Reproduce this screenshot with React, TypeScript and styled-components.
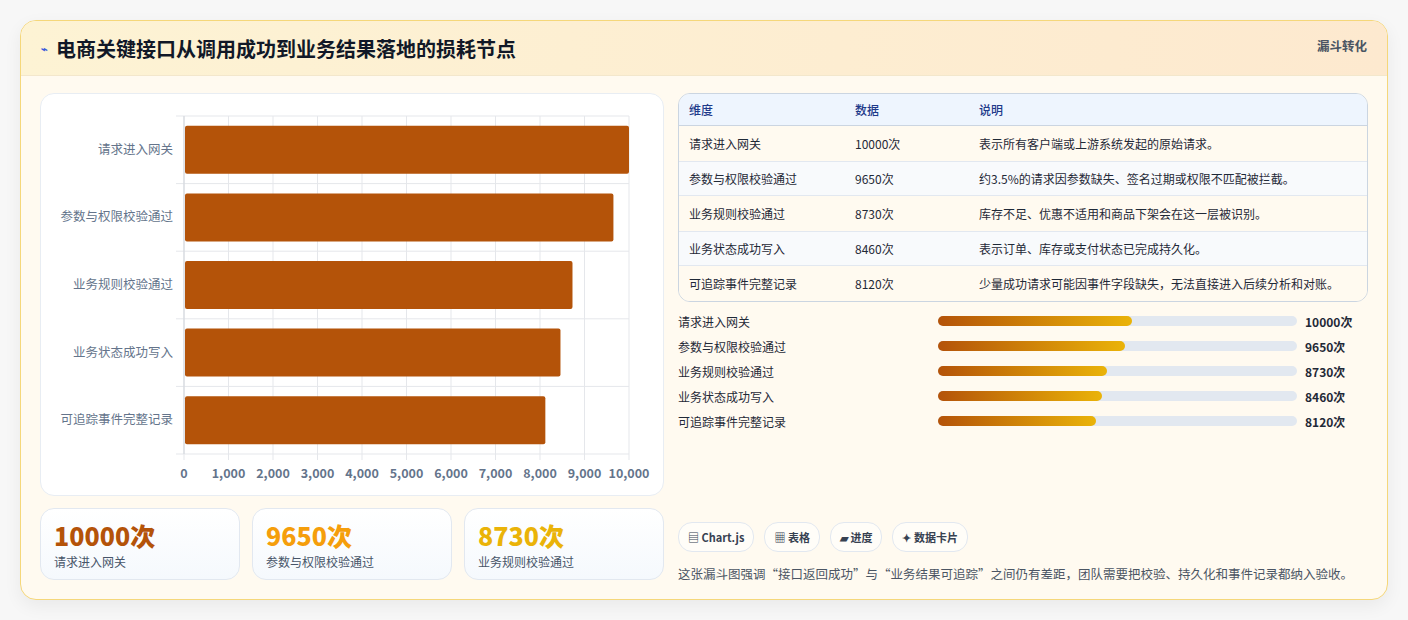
import styled, { createGlobalStyle } from "styled-components";

type Step = { name: string; value: number; note: string };

const steps: Step[] = [
  { name: "请求进入网关", value: 10000, note: "表示所有客户端或上游系统发起的原始请求。" },
  { name: "参数与权限校验通过", value: 9650, note: "约3.5%的请求因参数缺失、签名过期或权限不匹配被拦截。" },
  { name: "业务规则校验通过", value: 8730, note: "库存不足、优惠不适用和商品下架会在这一层被识别。" },
  { name: "业务状态成功写入", value: 8460, note: "表示订单、库存或支付状态已完成持久化。" },
  { name: "可追踪事件完整记录", value: 8120, note: "少量成功请求可能因事件字段缺失，无法直接进入后续分析和对账。" },
];

const statColors = ["#b45309", "#f59e0b", "#eab308"];

const Global = createGlobalStyle`
  body {
    margin: 0;
    background: #f7f7f7;
    font-family: "Noto Sans CJK SC", "Noto Sans", sans-serif;
  }
`;

const Page = styled.div`
  padding: 20px;
  height: 620px;
  box-sizing: border-box;
`;

const Card = styled.div`
  border: 1px solid #f5d77a;
  border-radius: 16px;
  overflow: hidden;
  background: #fffaf0;
  box-shadow: 0 6px 18px rgba(0, 0, 0, 0.06);
  height: 580px;
  box-sizing: border-box;
`;

const Header = styled.div`
  height: 55px;
  display: flex;
  align-items: center;
  justify-content: space-between;
  padding: 0 20px;
  background: linear-gradient(90deg, #fdf3d4, #fde9cf);
  border-bottom: 1px solid #f3e7cc;
  box-sizing: border-box;
`;

const Title = styled.h1`
  margin: 0;
  font-size: 20px;
  font-weight: 700;
  color: #111827;
  display: flex;
  align-items: center;
  gap: 8px;
`;

const Tag = styled.span`
  align-self: flex-start;
  margin-top: 15px;
  font-size: 12.5px;
  font-weight: 700;
  color: #4b5563;
`;

const Body = styled.div`
  display: grid;
  grid-template-columns: 624px 1fr;
  gap: 14px;
  padding: 17px 19px 0 19px;
`;

const Col = styled.div`
  display: flex;
  flex-direction: column;
  gap: 12px;
`;

const ChartPanel = styled.div`
  height: 403px;
  background: #fff;
  border: 1px solid #e8edf3;
  border-radius: 14px;
  box-sizing: border-box;
`;

const Stats = styled.div`
  display: grid;
  grid-template-columns: repeat(3, 1fr);
  gap: 12px;
`;

const Stat = styled.div`
  height: 72px;
  border: 1px solid #e2e8f0;
  border-radius: 14px;
  background: linear-gradient(180deg, #fff, #f5f9fd);
  padding: 10px 13px;
  box-sizing: border-box;
`;

const StatNum = styled.div<{ $c: string }>`
  font-size: 25px;
  font-weight: 800;
  line-height: 32px;
  color: ${(p) => p.$c};
`;

const StatLabel = styled.div`
  font-size: 12px;
  color: #475569;
  margin-top: 2px;
`;

const Table = styled.table`
  width: 100%;
  border-collapse: separate;
  border-spacing: 0;
  border: 1px solid #cbd5e1;
  border-radius: 12px;
  overflow: hidden;
  font-size: 12px;
  color: #1f2937;
`;

const Th = styled.th`
  text-align: left;
  height: 31px;
  padding: 0 10px;
  background: #eef5fe;
  color: #1e3a8a;
  font-weight: 500;
  border-bottom: 1px solid #cbd5e1;
`;

const Td = styled.td<{ $alt: boolean }>`
  height: 33px;
  padding: 0 10px;
  background: ${(p) => (p.$alt ? "#f8fafc" : "#fffaf0")};
  border-top: 1px solid ${(p) => (p.$alt ? "#e2e8f0" : "transparent")};
  border-bottom: 1px solid ${(p) => (p.$alt ? "#e2e8f0" : "transparent")};
`;

const Bars = styled.div`
  display: flex;
  flex-direction: column;
  gap: 7px;
  margin-top: -2px;
`;

const BarRow = styled.div`
  display: grid;
  grid-template-columns: 252px 359px 1fr;
  align-items: center;
  gap: 8px;
  font-size: 12px;
  color: #1f2937;
  height: 18px;
`;

const Track = styled.div`
  height: 10px;
  border-radius: 5px;
  background: #e2e8f0;
`;

const Fill = styled.div`
  height: 100%;
  border-radius: 5px;
  background: linear-gradient(90deg, #b45309, #eab308);
`;

const BarValue = styled.span`
  font-weight: 700;
`;

const Chips = styled.div`
  display: flex;
  gap: 10px;
  margin-top: 80px;
`;

const Chip = styled.span`
  height: 28px;
  padding: 0 9px;
  border: 1px solid #e2e8f0;
  border-radius: 14px;
  background: #fffdf8;
  display: flex;
  align-items: center;
  gap: 4px;
  font-size: 11px;
  font-weight: 700;
  color: #374151;
`;

const Note = styled.p`
  margin: 0;
  font-size: 12.5px;
  color: #4b5563;
`;

const W = 624;
const left = 143;
const right = 588;
const top = 22;
const rowH = 67.6;

const Chart = () => (
  <svg width={W} height={403} style={{ display: "block" }}>
    {Array.from({ length: 11 }, (_, i) => {
      const x = left + (i * (right - left)) / 10;
      return <line key={i} x1={x} x2={x} y1={top} y2={top + rowH * 5 + 6} stroke="#e5e7eb" />;
    })}
    {Array.from({ length: 6 }, (_, i) => (
      <line key={i} x1={left - 8} x2={right} y1={top + i * rowH} y2={top + i * rowH} stroke="#e5e7eb" />
    ))}
    <line x1={left} x2={left} y1={top} y2={top + rowH * 5} stroke="#d1d5db" />
    {steps.map((s, i) => {
      const cy = top + i * rowH + rowH / 2;
      const w = ((right - left) * s.value) / 10000;
      return (
        <g key={s.name}>
          <rect x={left + 1} y={cy - 24} width={w - 1} height={48} rx={2} fill="#b45309" />
          <text x={left - 11} y={cy + 4} textAnchor="end" fontSize={12.5} fill="#64748b">
            {s.name}
          </text>
        </g>
      );
    })}
    {Array.from({ length: 11 }, (_, i) => {
      const x = left + (i * (right - left)) / 10;
      return (
        <text key={i} x={x} y={384} textAnchor="middle" fontSize={12.5} fontWeight={700} fill="#64748b">
          {(i * 1000).toLocaleString("en-US")}
        </text>
      );
    })}
  </svg>
);

export default function App() {
  return (
    <Page>
      <Global />
      <Card>
        <Header>
          <Title>
            <span style={{ fontSize: 11, color: "#3b5bdb" }}>⌁</span>
            电商关键接口从调用成功到业务结果落地的损耗节点
          </Title>
          <Tag>漏斗转化</Tag>
        </Header>
        <Body>
          <Col>
            <ChartPanel>
              <Chart />
            </ChartPanel>
            <Stats>
              {steps.slice(0, 3).map((s, i) => (
                <Stat key={s.name}>
                  <StatNum $c={statColors[i]}>{s.value}次</StatNum>
                  <StatLabel>{s.name}</StatLabel>
                </Stat>
              ))}
            </Stats>
          </Col>
          <Col>
            <Table>
              <thead>
                <tr>
                  <Th style={{ width: 146 }}>维度</Th>
                  <Th style={{ width: 104 }}>数据</Th>
                  <Th>说明</Th>
                </tr>
              </thead>
              <tbody>
                {steps.map((s, i) => (
                  <tr key={s.name}>
                    <Td $alt={i % 2 === 1}>{s.name}</Td>
                    <Td $alt={i % 2 === 1}>{s.value}次</Td>
                    <Td $alt={i % 2 === 1}>{s.note}</Td>
                  </tr>
                ))}
              </tbody>
            </Table>
            <Bars>
              {steps.map((s) => (
                <BarRow key={s.name}>
                  <span>{s.name}</span>
                  <Track>
                    <Fill style={{ width: `${(s.value / 18500) * 100}%` }} />
                  </Track>
                  <BarValue>{s.value}次</BarValue>
                </BarRow>
              ))}
            </Bars>
            <Chips>
              <Chip>▤ Chart.js</Chip>
              <Chip>▦ 表格</Chip>
              <Chip>▰ 进度</Chip>
              <Chip>✦ 数据卡片</Chip>
            </Chips>
            <Note>这张漏斗图强调“接口返回成功”与“业务结果可追踪”之间仍有差距，团队需要把校验、持久化和事件记录都纳入验收。</Note>
          </Col>
        </Body>
      </Card>
    </Page>
  );
}
